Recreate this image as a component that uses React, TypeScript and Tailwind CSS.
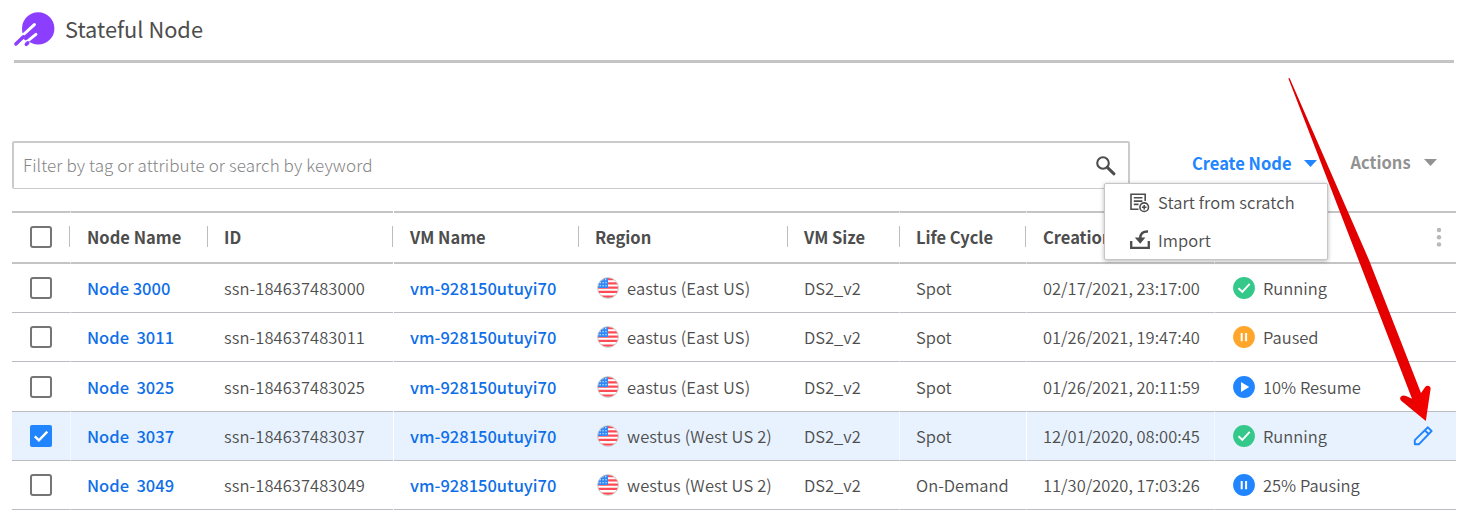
import React from "react";

const cols = "grid grid-cols-[58px_138px_185px_185px_209px_112px_127px_188px_208px_34px]";

const seams = [
  "",
  "border-l border-l-white/50 pl-[16px]",
  "pl-[16px]",
  "ml-px pl-[16px]",
  "pl-[17px]",
  "pl-[17px]",
  "border-l border-l-white/50 pl-[16px]",
  "border-l border-l-white pl-[16px]",
  "border-l border-l-white/50 pl-[18px]",
  "",
];

type Kind = "ok" | "paused" | "play" | "pausing";

const rows: { h: string; name: string; id: string; region: string; cycle: string; date: string; kind: Kind; status: string; on?: boolean }[] = [
  { h: "h-[49px]", name: "Node 3000", id: "ssn-184637483000", region: "eastus (East US)", cycle: "Spot", date: "02/17/2021, 23:17:00", kind: "ok", status: "Running" },
  { h: "h-[49px]", name: "Node  3011", id: "ssn-184637483011", region: "eastus (East US)", cycle: "Spot", date: "01/26/2021, 19:47:40", kind: "paused", status: "Paused" },
  { h: "h-[50px]", name: "Node  3025", id: "ssn-184637483025", region: "eastus (East US)", cycle: "Spot", date: "01/26/2021, 20:11:59", kind: "play", status: "10% Resume" },
  { h: "h-[49px]", name: "Node  3037", id: "ssn-184637483037", region: "westus (West US 2)", cycle: "Spot", date: "12/01/2020, 08:00:45", kind: "ok", status: "Running", on: true },
  { h: "h-[49px]", name: "Node  3049", id: "ssn-184637483049", region: "westus (West US 2)", cycle: "On-Demand", date: "11/30/2020, 17:03:26", kind: "pausing", status: "25% Pausing" },
];

function Logo() {
  return (
    <svg width="44" height="40" viewBox="12 8 44 40" className="shrink-0">
      <circle cx="38.2" cy="27.4" r="16.2" fill="#8c3eff" />
      <g strokeLinecap="round">
        <path d="M23 34L34.4 23.6M28.4 39.4L35.9 33.4" stroke="#fff" strokeWidth="3" />
        <path d="M22 37.5L25 40.5" stroke="#fff" strokeWidth="1.6" />
        <path d="M15.9 43L23.4 35.8M26.3 43.3L27.8 41.9" stroke="#8c3eff" strokeWidth="3.5" />
        <path d="M25.6 37.6L30.5 33" stroke="#8c3eff" strokeWidth="3.2" />
      </g>
    </svg>
  );
}

function Box({ on }: { on?: boolean }) {
  return on ? (
    <span className="flex size-[22px] items-center justify-center rounded-[2px] bg-[#2085ff]">
      <svg width="22" height="22" viewBox="0 0 22 22" fill="none" stroke="#fff" strokeWidth="2.4">
        <path d="M4.8 11.3L8.9 15.4L17.3 6.6" />
      </svg>
    </span>
  ) : (
    <span className="size-[22px] rounded-[3px] border-2 border-[#757575] bg-white" />
  );
}

function Flag() {
  return (
    <svg width="22" height="22" viewBox="0 0 22 22" className="ml-[2px] shrink-0">
      <clipPath id="disc"><circle cx="11" cy="11" r="10.3" /></clipPath>
      <g clipPath="url(#disc)">
        <rect width="22" height="22" fill="#fff" />
        <path d="M0 2.2H22M0 6.4H22M0 10.6H22M0 14.8H22M0 19.6H22" stroke="#ff4b55" strokeWidth="2.3" />
        <rect width="11" height="11" fill="#2f88f5" />
        <path d="M5.2 2.8H11M2.6 5.8H11M2.6 8.8H11" stroke="#fff" strokeWidth="1.1" strokeDasharray="1.2 1.7" />
      </g>
      <circle cx="11" cy="11" r="10.4" fill="none" stroke="#c4c4c4" strokeWidth="0.9" />
    </svg>
  );
}

function Status({ kind }: { kind: Kind }) {
  const fill = kind === "ok" ? "#34c98a" : kind === "paused" ? "#ffa62b" : "#2085ff";
  return (
    <svg width="22" height="22" viewBox="0 0 22 22" className="shrink-0">
      <circle cx="11" cy="11" r="10.9" fill={fill} />
      {kind === "ok" && <path d="M5.5 11.2L9.3 14.8L16.7 6.8" fill="none" stroke="#fff" strokeWidth="1.9" />}
      {kind === "play" && <path d="M8 6L16.2 11L8 16Z" fill="#fff" />}
      {(kind === "paused" || kind === "pausing") && <path d="M8.7 7V15.2M13.1 7V15.2" stroke="#fff" strokeWidth="2" />}
    </svg>
  );
}

function Cell({ i, line, className = "", children }: { i: number; line: string; className?: string; children?: React.ReactNode }) {
  return <div className={`flex min-w-0 items-center whitespace-pre ${line} ${seams[i]} ${className}`}>{children}</div>;
}

function Th({ i, children }: { i: number; children: React.ReactNode }) {
  return <Cell i={i} line="border-y-2 border-y-[#c4c4c4]" className="pb-[2px] font-bold">{children}</Cell>;
}

function Divider({ className = "" }: { className?: string }) {
  return <span className={`relative z-10 ml-auto h-[21px] w-px bg-[#bdbdbd] ${className}`} />;
}

export default function App() {
  return (
    <div className="relative h-[512px] w-[1466px] overflow-hidden bg-white font-['Noto_Sans_CJK_SC','Noto_Sans',sans-serif] text-[16.5px] leading-[24px] text-[#4d4d4d]">
      <header className="ml-[14px] flex h-[63px] w-[1440px] items-center border-b-[3px] border-[#c4c4c4]">
        <div className="-ml-[2px] flex items-center pb-[2px]">
          <Logo />
          <h1 className="ml-[9px] text-[21.8px]">Stateful Node</h1>
        </div>
      </header>

      <div className="mt-[78px] flex h-[48px] pl-[12px]">
        <div className="flex w-[1118px] items-center justify-between rounded-[2px] border-2 border-b border-[#cbcbcb] pr-[11px] pl-[9px] text-[#858585]">
          <span className="pb-[2px] text-[17px] font-light tracking-[0.1px]">Filter by tag or attribute or search by keyword</span>
          <svg width="22" height="22" viewBox="0 0 22 22" fill="none" stroke="#4d4d4d">
            <circle cx="8" cy="8" r="5.8" strokeWidth="2.1" />
            <path d="M12.3 12.3L19 18.8" strokeWidth="3" strokeLinecap="round" />
          </svg>
        </div>
        <div className="ml-[62px] flex h-[44px] items-center font-bold text-[#2085ff]">
          <span>Create Node</span>
          <svg width="13" height="7" className="ml-[13px]"><path d="M0 0H13L6.5 7Z" fill="#2085ff" /></svg>
        </div>
        <div className="ml-[33px] flex h-[42px] items-center font-bold text-[#929292]">
          <span>Actions</span>
          <svg width="13" height="7" className="ml-[13px]"><path d="M0 0H13L6.5 7Z" fill="#929292" /></svg>
        </div>
      </div>

      <main className="mt-[22px] ml-[12px] w-[1444px]">
        <div className={`${cols} h-[53px] w-[1440px]`}>
          <Th i={0}><span className="pl-[18px]"><span className="flex"><Box /></span></span><Divider /></Th>
          <Th i={1}>Node Name<Divider /></Th>
          <Th i={2}>ID<Divider /></Th>
          <Th i={3}>VM Name<Divider className="-mr-px" /></Th>
          <Th i={4}>Region<Divider className="-mr-px" /></Th>
          <Th i={5}>VM Size<Divider className="-mr-px" /></Th>
          <Th i={6}>Life Cycle<Divider /></Th>
          <Th i={7}>Creation</Th>
          <Th i={8}>{null}</Th>
          <Th i={9}>
            <svg width="6" height="20" viewBox="0 0 6 20" fill="#b8b8b8" className="ml-[13.5px]">
              <circle cx="3" cy="3" r="2.2" /><circle cx="3" cy="10.2" r="2.2" /><circle cx="3" cy="17.4" r="2.2" />
            </svg>
          </Th>
        </div>
        {rows.map((r) => {
          const line = `border-b border-b-[#b9bcc0] ${r.on ? "bg-[#e7f2fe]" : ""}`;
          return (
            <div key={r.id} className={`${cols} ${r.h}`}>
              <Cell i={0} line={line} className="pl-[18px]"><Box on={r.on} /></Cell>
              <Cell i={1} line={line} className="font-medium text-[#0f6fe8]">{r.name}</Cell>
              <Cell i={2} line={line} className="font-[350] tracking-[0.08px]">{r.id}</Cell>
              <Cell i={3} line={line} className="font-medium text-[#0f6fe8]">vm-928150utuyi70</Cell>
              <Cell i={4} line={line} className="gap-[8px] font-[350] tracking-[0.15px]"><Flag />{r.region}</Cell>
              <Cell i={5} line={line} className="font-[350]">DS2_v2</Cell>
              <Cell i={6} line={line} className="font-[350]">{r.cycle}</Cell>
              <Cell i={7} line={line} className="font-[350]">{r.date}</Cell>
              <Cell i={8} line={line} className="gap-[8px] font-[350]"><Status kind={r.kind} />{r.status}</Cell>
              <Cell i={9} line={line}>
                {r.on && (
                  <svg width="22" height="22" viewBox="0 0 22 22" fill="none" stroke="#2085ff" strokeWidth="1.9" className="-ml-[10px]" strokeLinejoin="round">
                    <path d="M2.8 19.3V15.1L15.9 2.3L19.6 6L6.8 19.3ZM12.8 5.3L16.6 9" />
                  </svg>
                )}
              </Cell>
            </div>
          );
        })}
      </main>

      <div className="absolute top-[183px] left-[1104px] z-20 h-[77px] w-[224px] rounded-[2px] border border-[#c6c6c6] bg-white pl-[25px] shadow-[0_1px_4px_rgba(0,0,0,0.3)]">
        <div className="flex h-[37px] items-center gap-[8px]">
          <svg width="20" height="20" viewBox="0 0 20 20" fill="none" stroke="#4d4d4d" strokeWidth="1.6">
            <path d="M8.5 16.2H1V1.2H15.2V8M3.8 4.8H12.4M3.8 8.1H12.4M3.8 11.4H8.5" />
            <circle cx="14.2" cy="14.2" r="4.3" /><path d="M14.2 11.9V16.5M11.9 14.2H16.5" />
          </svg>
          <span className="pb-px font-[350] tracking-[0.08px]">Start from scratch</span>
        </div>
        <div className="flex h-[37px] items-center gap-[8px]">
          <svg width="20" height="20" viewBox="0 0 20 20" fill="none" stroke="#4d4d4d">
            <path d="M1.2 11V17.8H18.8V11" strokeWidth="2.3" />
            <path d="M18 1.5C13 1.3 10.2 3.5 10.2 8.5" strokeWidth="2.5" />
            <path d="M4.8 7.4H15.4L10.2 13.7Z" fill="#4d4d4d" stroke="none" />
          </svg>
          <span className="font-[350] tracking-[0.08px]">Import</span>
        </div>
      </div>

      <svg width="160" height="352" viewBox="1280 74 160 352" className="pointer-events-none absolute top-[74px] left-[1280px] z-30">
        <defs>
          <linearGradient id="red" x1="0" x2="1" y1="0" y2="0"><stop offset="0" stopColor="#dc0000" /><stop offset="0.85" stopColor="#e80000" /><stop offset="1" stopColor="#f60000" /></linearGradient>
        </defs>
        <path d="M1288.4 78.5Q1289 77.5 1289.8 78.5L1369 260L1421 393L1424.5 388Q1426 385 1429 386Q1431 387 1430.5 389.5L1425.8 421L1401.5 401Q1399 398.5 1401 396.5Q1403 394.7 1406 396L1412 398.8L1358.5 260Z" fill="url(#red)" />
      </svg>
    </div>
  );
}
